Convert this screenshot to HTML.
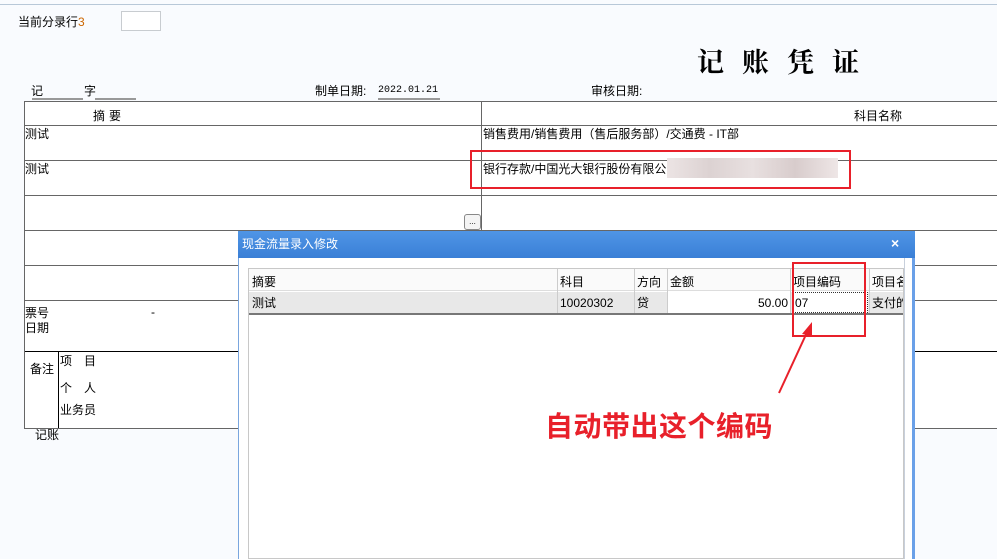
<!DOCTYPE html>
<html><head><meta charset="utf-8"><style>
*{margin:0;padding:0;box-sizing:border-box}
body{width:997px;height:559px;overflow:hidden;background:#f9fbfe;position:relative;font-family:"Liberation Sans","Noto Sans CJK SC",sans-serif;font-size:12px;color:#000}
.a{position:absolute;white-space:nowrap;line-height:14px}
.h{position:absolute;height:1px;background:#666}
.v{position:absolute;width:1px;background:#666}
</style></head><body>
<div class="h" style="left:0;top:4px;width:997px;background:#b8c8d8"></div>
<div class="a" style="left:18px;top:15px">当前分录行<span style="color:#c60">3</span></div>
<div style="position:absolute;left:121px;top:11px;width:40px;height:20px;border:1px solid #c8ccd0;background:#fff"></div>
<div class="a" style="left:697px;top:46px;font-family:'Noto Serif CJK SC',serif;font-size:27px;line-height:30px;letter-spacing:18px;font-weight:bold">记账凭证</div>
<div class="a" style="left:31px;top:84px">记</div>
<div class="h" style="left:32px;top:98px;width:51px;background:#999;height:2px"></div>
<div class="a" style="left:84px;top:84px">字</div>
<div class="h" style="left:95px;top:98px;width:41px;background:#999;height:2px"></div>
<div class="a" style="left:315px;top:84px">制单日期:</div>
<div class="a" style="left:378px;top:84px;font-family:'Liberation Mono',monospace;font-size:10px">2022.01.21</div>
<div class="h" style="left:378px;top:98px;width:62px;background:#999;height:2px"></div>
<div class="a" style="left:591px;top:84px">审核日期:</div>
<!-- table -->
<div style="position:absolute;left:24px;top:101px;width:973px;height:328px;background:#fff"></div>
<div class="h" style="left:24px;top:101px;width:973px"></div>
<div class="h" style="left:24px;top:125px;width:973px"></div>
<div class="h" style="left:24px;top:160px;width:973px"></div>
<div class="h" style="left:24px;top:195px;width:973px"></div>
<div class="h" style="left:24px;top:230px;width:973px"></div>
<div class="h" style="left:24px;top:265px;width:973px"></div>
<div class="h" style="left:24px;top:300px;width:973px"></div>
<div class="h" style="left:24px;top:351px;width:973px;background:#000"></div>
<div class="h" style="left:24px;top:428px;width:973px"></div>
<div class="v" style="left:24px;top:101px;height:328px"></div>
<div class="v" style="left:481px;top:101px;height:129px"></div>
<div class="v" style="left:58px;top:351px;height:77px;background:#000"></div>
<div class="a" style="left:93px;top:109px;letter-spacing:4px">摘要</div>
<div class="a" style="left:854px;top:109px">科目名称</div>
<div class="a" style="left:25px;top:127px">测试</div>
<div class="a" style="left:25px;top:162px">测试</div>
<div class="a" style="left:483px;top:127px">销售费用/销售费用（售后服务部）/交通费 - IT部</div>
<div class="a" style="left:483px;top:162px">银行存款/中国光大银行股份有限公司</div>
<div style="position:absolute;left:667px;top:158px;width:171px;height:20px;background:linear-gradient(90deg,#ece4e4,#dcd2d2,#e8e0e0,#d8cccc,#eee6e6)"></div>
<div style="position:absolute;left:470px;top:150px;width:381px;height:39px;border:2px solid #e8202a"></div>
<div style="position:absolute;left:464px;top:214px;width:17px;height:16px;border:1px solid #888;border-radius:3px;background:#f4f4f4;font-size:8px;line-height:14px;text-align:center">...</div>
<div class="a" style="left:25px;top:306px">票号</div>
<div class="a" style="left:151px;top:305px">-</div>
<div class="a" style="left:25px;top:321px">日期</div>
<div class="a" style="left:30px;top:362px">备注</div>
<div class="a" style="left:60px;top:354px;letter-spacing:12px">项目</div>
<div class="a" style="left:60px;top:381px;letter-spacing:12px">个人</div>
<div class="a" style="left:60px;top:403px">业务员</div>
<div class="a" style="left:35px;top:428px">记账</div>
<!-- dialog -->
<div style="position:absolute;left:238px;top:231px;width:677px;height:328px;background:#fff;border-left:1px solid #7aa6de;border-right:3px solid #6aa0e8"></div>
<div style="position:absolute;left:238px;top:231px;width:677px;height:27px;background:linear-gradient(#4f95e6,#3a7fd6)"></div>
<div class="a" style="left:242px;top:237px;color:#fff">现金流量录入修改</div>
<div class="a" style="left:891px;top:236px;color:#fff;font-weight:bold;font-size:14px">×</div>
<div class="v" style="left:904px;top:258px;height:301px;background:#c8d0dc"></div>
<div style="position:absolute;left:248px;top:268px;width:656px;height:291px;border:1px solid #c8c8c8;background:#fff"></div>
<div style="position:absolute;left:249px;top:269px;width:654px;height:22px;background:#fafafa;border-bottom:1px solid #ddd"></div>
<div style="position:absolute;left:249px;top:292px;width:654px;height:21px;background:#e8e8e8"></div>
<div class="h" style="left:249px;top:313px;width:654px;height:2px;background:#777"></div>
<div style="position:absolute;left:668px;top:292px;width:122px;height:21px;background:#fff"></div>
<div style="position:absolute;left:792px;top:292px;width:76px;height:21px;background:#fff;border:1px dotted #333"></div>
<div class="v" style="left:557px;top:269px;height:44px;background:#ccc"></div>
<div class="v" style="left:634px;top:269px;height:44px;background:#ccc"></div>
<div class="v" style="left:667px;top:269px;height:44px;background:#ccc"></div>
<div class="v" style="left:790px;top:269px;height:44px;background:#ccc"></div>
<div class="v" style="left:869px;top:269px;height:44px;background:#ccc"></div>
<div class="a" style="left:252px;top:275px">摘要</div>
<div class="a" style="left:560px;top:275px">科目</div>
<div class="a" style="left:637px;top:275px">方向</div>
<div class="a" style="left:670px;top:275px">金额</div>
<div class="a" style="left:793px;top:275px">项目编码</div>
<div class="a" style="left:872px;top:275px;width:31px;overflow:hidden">项目名</div>
<div class="a" style="left:252px;top:296px">测试</div>
<div class="a" style="left:560px;top:296px">10020302</div>
<div class="a" style="left:637px;top:296px">贷</div>
<div class="a" style="left:730px;top:296px;width:58px;text-align:right">50.00</div>
<div class="a" style="left:795px;top:296px">07</div>
<div class="a" style="left:872px;top:296px;width:31px;overflow:hidden">支付的</div>
<div style="position:absolute;left:792px;top:262px;width:74px;height:75px;border:2px solid #e8202a"></div>
<svg style="position:absolute;left:770px;top:318px" width="50" height="80"><line x1="9" y1="75" x2="39" y2="10" stroke="#e8202a" stroke-width="2"/><polygon points="42,4 32,16 42,18" fill="#e8202a"/></svg>
<div class="a" style="left:545px;top:408px;font-size:28px;line-height:34px;font-weight:bold;color:#e8202a;font-family:'Noto Sans CJK SC',sans-serif;letter-spacing:0.5px">自动带出这个编码</div>
</body></html>
